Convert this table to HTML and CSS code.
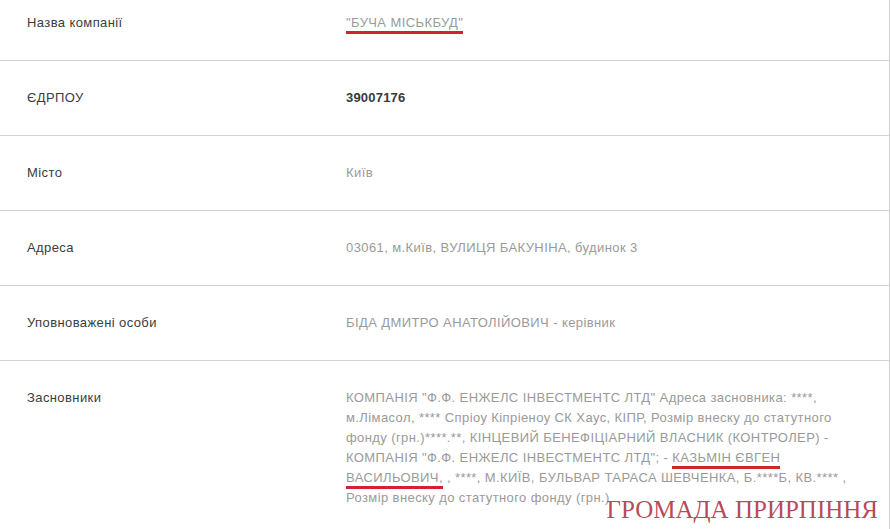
FILE: index.html
```html
<!DOCTYPE html>
<html lang="uk">
<head>
    <meta charset="UTF-8">
    <meta name="viewport" content="width=device-width, initial-scale=1.0">
    <title>БУЧА МІСЬКБУД</title>
    <link rel="stylesheet" href="styles.css">
</head>
<body>
    <div class="company-card">
        <div class="row first">
            <div class="label">Назва компанії</div>
            <div class="value"><span class="mark">"БУЧА МІСЬКБУД"</span></div>
        </div>
        <div class="row">
            <div class="label">ЄДРПОУ</div>
            <div class="value strong">39007176</div>
        </div>
        <div class="row">
            <div class="label">Місто</div>
            <div class="value">Київ</div>
        </div>
        <div class="row">
            <div class="label">Адреса</div>
            <div class="value">03061, м.Київ, ВУЛИЦЯ БАКУНІНА, будинок 3</div>
        </div>
        <div class="row">
            <div class="label">Уповноважені особи</div>
            <div class="value">БІДА ДМИТРО АНАТОЛІЙОВИЧ - керівник</div>
        </div>
        <div class="row">
            <div class="label">Засновники</div>
            <div class="value">КОМПАНІЯ "Ф.Ф. ЕНЖЕЛС ІНВЕСТМЕНТС ЛТД" Адреса засновника: ****, м.Лімасол, **** Спріоу Кіпріеноу СК Хаус, КІПР, Розмір внеску до статутного фонду (грн.)****.**, КІНЦЕВИЙ БЕНЕФІЦІАРНИЙ ВЛАСНИК (КОНТРОЛЕР) - КОМПАНІЯ "Ф.Ф. ЕНЖЕЛС ІНВЕСТМЕНТС ЛТД"; - <span class="mark">КАЗЬМІН ЄВГЕН ВАСИЛЬОВИЧ,</span> , ****, М.КИЇВ, БУЛЬВАР ТАРАСА ШЕВЧЕНКА, Б.****Б, КВ.**** , Розмір внеску до статутного фонду (грн.)</div>
        </div>
    </div>
    <div class="watermark">ГРОМАДА ПРИРПІННЯ</div>
</body>
</html>
```

FILE: styles.css
```css
html, body {
    margin: 0;
    overflow: hidden;
    background-color: #ffffff;
}
body {
    position: relative;
    height: 529px;
    font-family: "Liberation Sans", Arial, sans-serif;
    font-size: 13px;
    line-height: 20px;
    letter-spacing: 0.4px;
    color: #444;
}
.company-card {
    width: 889px;
    margin-top: -14px;
    border-right: 1px solid #cfcfcf;
}
.row {
    display: grid;
    grid-template-columns: 319px 1fr;
    padding: 27px 30px 27px 27px;
    border-bottom: 1px solid #d2d2d2;
}
.label {
    color: #3c3c3c;
}
.value {
    color: #9a9a9a;
}
.value.strong {
    color: #3a3a3a;
    font-weight: bold;
    letter-spacing: 0.2px;
}
.mark {
    border-bottom: 3px solid #d3222e;
    padding-bottom: 1px;
}
.watermark {
    position: absolute;
    right: 12px;
    top: 497px;
    font-family: "Liberation Serif", "Times New Roman", serif;
    font-size: 25px;
    line-height: 25px;
    letter-spacing: 0;
    color: rgba(176, 56, 74, 0.92);
}
```
